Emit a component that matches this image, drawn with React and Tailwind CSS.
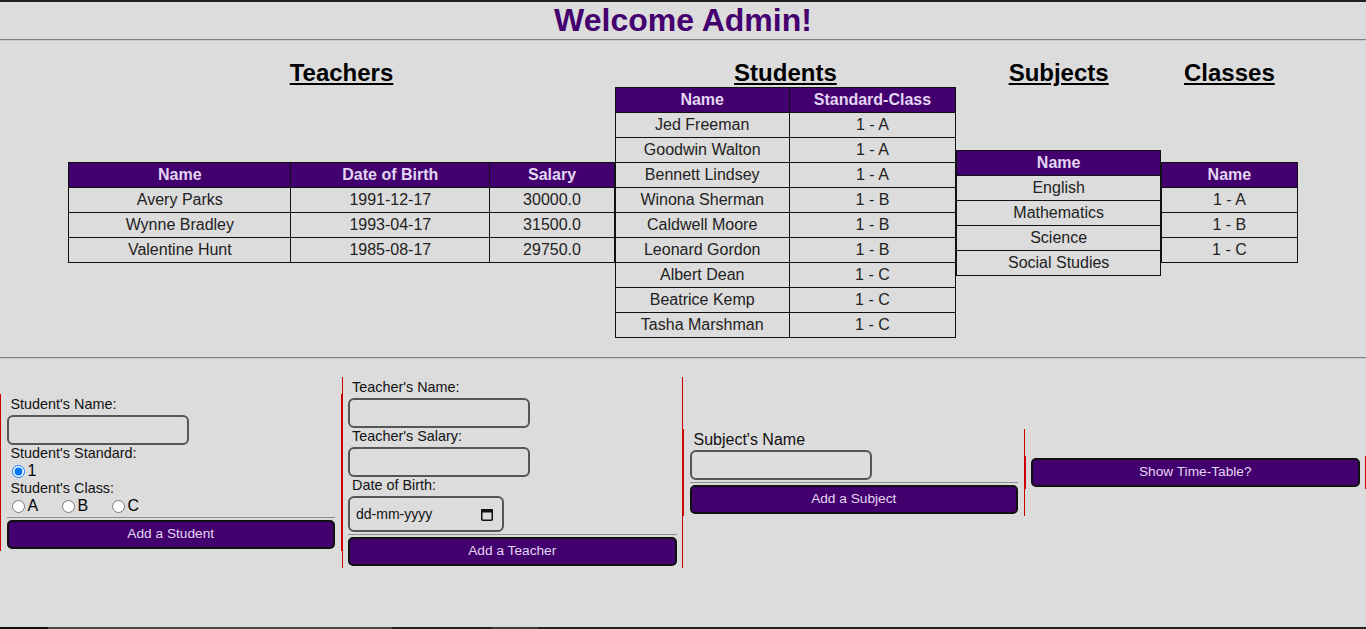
import React from 'react';

const teachers = [
  ['Avery Parks', '1991-12-17', '30000.0'],
  ['Wynne Bradley', '1993-04-17', '31500.0'],
  ['Valentine Hunt', '1985-08-17', '29750.0'],
];

const students = [
  ['Jed Freeman', '1 - A'],
  ['Goodwin Walton', '1 - A'],
  ['Bennett Lindsey', '1 - A'],
  ['Winona Sherman', '1 - B'],
  ['Caldwell Moore', '1 - B'],
  ['Leonard Gordon', '1 - B'],
  ['Albert Dean', '1 - C'],
  ['Beatrice Kemp', '1 - C'],
  ['Tasha Marshman', '1 - C'],
];

const subjects = [['English'], ['Mathematics'], ['Science'], ['Social Studies']];
const classes = [['1 - A'], ['1 - B'], ['1 - C']];

function DataTable({ cols, rows, widths }) {
  return (
    <table className="w-full border-collapse text-center text-[16px]">
      <thead>
        <tr className="bg-[#42006e] text-[#e3d6f3]">
          {cols.map((c, i) => (
            <th key={c} className={'h-[25px] border border-[#111] p-0 font-bold ' + (widths ? widths[i] : '')}>
              {c}
            </th>
          ))}
        </tr>
      </thead>
      <tbody>
        {rows.map((r, i) => (
          <tr key={i} className="text-[#222]">
            {r.map((v, j) => (
              <td key={j} className="h-[25px] border border-[#111] p-0">{v}</td>
            ))}
          </tr>
        ))}
      </tbody>
    </table>
  );
}

function Column({ title, width, children }) {
  return (
    <div className={'flex flex-col ' + width}>
      <h2 className="mt-[19px] text-center text-[24px] font-bold leading-[26px] text-black underline">{title}</h2>
      <div className="flex flex-1 items-center pt-[1px]">{children}</div>
    </div>
  );
}

function Label({ children, big }) {
  return (
    <div className={'pl-[4px] leading-[17px] text-[#111] ' + (big ? 'text-[16px]' : 'text-[14.4px]')}>
      {children}
    </div>
  );
}

function TextBox() {
  return <input type="text" className="mt-[2px] block h-[30px] w-[182px] rounded-[6px] border-2 border-[#555] bg-transparent px-1 outline-none" />;
}

function SubmitButton({ text }) {
  return (
    <div className="mt-[2px] border-t border-[#8e8e8e] pt-[2px]">
      <button className="block h-[29px] w-full rounded-[5px] border-2 border-[#111] bg-[#42006e] text-[13.7px] text-[#e3d6f3]">
        {text}
      </button>
    </div>
  );
}

function Hr() {
  return <div className="h-[2px] border-t border-[#7f7f7f] bg-[#c9c9c9]"></div>;
}

export default function App() {
  return (
    <div className="flex min-h-screen flex-col border-t-2 border-[#1e1e1e] bg-[#dcdcdc] font-['Liberation_Sans',Arial,sans-serif] text-[16px]">
      <h1 className="text-center text-[32px] font-bold leading-[37px] text-[#45006f]">Welcome Admin!</h1>
      <Hr />

      <div className="flex justify-center pb-[19px]">
        <Column title="Teachers" width="w-[40%]">
          <DataTable
            cols={['Name', 'Date of Birth', 'Salary']}
            rows={teachers}
            widths={['w-[222px]', 'w-[199px]', '']}
          />
        </Column>
        <Column title="Students" width="w-[25%]">
          <DataTable cols={['Name', 'Standard-Class']} rows={students} widths={['w-[174px]', '']} />
        </Column>
        <Column title="Subjects" width="w-[15%]">
          <DataTable cols={['Name']} rows={subjects} />
        </Column>
        <Column title="Classes" width="w-[10%]">
          <DataTable cols={['Name']} rows={classes} />
        </Column>
      </div>

      <Hr />

      <div className="flex items-center py-[18px]">
        {/* student form */}
        <div className="w-1/4 border-x border-[#cc0000] px-[5.5px] py-[2px]">
          <Label>Student's Name:</Label>
          <TextBox />
          <Label>Student's Standard:</Label>
          <div className="flex h-[18px] items-center">
            <label className="flex items-center">
              <input type="radio" name="std" defaultChecked className="mr-[3px] ml-[5px] h-[13px] w-[13px]" />
              <span>1</span>
            </label>
          </div>
          <Label>Student's Class:</Label>
          <div className="flex h-[18px] items-center">
            {['A', 'B', 'C'].map((c) => (
              <label key={c} className="flex w-[50px] items-center">
                <input type="radio" name="cls" className="mr-[3px] ml-[5px] h-[13px] w-[13px]" />
                <span>{c}</span>
              </label>
            ))}
          </div>
          <SubmitButton text="Add a Student" />
        </div>

        {/* teacher form */}
        <div className="w-1/4 border-x border-[#cc0000] px-[5.5px] py-[2px]">
          <Label>Teacher's Name:</Label>
          <TextBox />
          <Label>Teacher's Salary:</Label>
          <TextBox />
          <Label>Date of Birth:</Label>
          <div className="mt-[2px] flex h-[36px] w-[156px] items-center justify-between rounded-[6px] border-2 border-[#555] pr-[9px] pl-[6px] text-[14px] text-[#111]">
            <span>dd-mm-yyyy</span>
            <svg width="12" height="13" viewBox="0 0 12 13">
              <rect x="0.75" y="1.75" width="10.5" height="10.5" rx="1" fill="none" stroke="#111" strokeWidth="1.5" />
              <rect x="0" y="1" width="12" height="3.5" rx="1" fill="#111" />
            </svg>
          </div>
          <SubmitButton text="Add a Teacher" />
        </div>

        {/* subject form */}
        <div className="w-1/4 border-x border-[#cc0000] px-[5.5px] py-[2px]">
          <Label big>Subject's Name</Label>
          <TextBox />
          <SubmitButton text="Add a Subject" />
        </div>

        {/* time table */}
        <div className="w-1/4 border-x border-[#cc0000] px-[5.5px] py-[2px]">
          <button className="block h-[29px] w-full rounded-[5px] border-2 border-[#111] bg-[#42006e] text-[13.7px] text-[#e3d6f3]">
            Show Time-Table?
          </button>
        </div>
      </div>

      <div className="mt-auto flex h-[2px]">
        <div className="w-[48px] bg-[#111]"></div>
        <div className="w-[344px] bg-[#4a4a4a]"></div>
        <div className="w-[100px] bg-[#222]"></div>
        <div className="w-[46px] bg-[#3a3a3a]"></div>
        <div className="flex-1 bg-[#222]"></div>
      </div>
    </div>
  );
}
